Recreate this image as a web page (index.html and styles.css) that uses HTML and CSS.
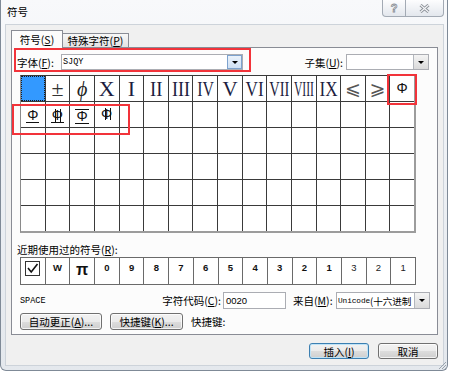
FILE: index.html
```html
<!DOCTYPE html>
<html lang="zh-CN">
<head>
<meta charset="utf-8">
<title>符号</title>
<link rel="stylesheet" href="styles.css">
</head>
<body>
<div class="window">
  <div class="titlebar">
    <span class="title">符号</span>
    <div class="caption">
      <span class="cap-btn help"><span class="help-glyph">?</span></span>
      <span class="cap-btn close">
        <svg width="11" height="9" viewBox="0 0 11 9"><path d="M1.5 1 L9.5 8 M9.5 1 L1.5 8" stroke="#8c9198" stroke-width="3"/><path d="M1.5 1 L9.5 8 M9.5 1 L1.5 8" stroke="#f5f6f8" stroke-width="1.1"/></svg>
      </span>
    </div>
  </div>
  <div class="client">
    <div class="tabs">
      <div class="tab active">符号(<u>S</u>)</div>
      <div class="tab">特殊字符(<u>P</u>)</div>
    </div>
    <div class="panel">
      <div class="font-row">
        <span class="lbl font-lbl">字体(<u>F</u>):</span>
        <div class="combo font-combo"><span class="combo-text mono">SJQY</span><span class="dd focus"></span></div>
        <span class="lbl subset-lbl">子集(<u>U</u>):</span>
        <div class="combo subset-combo"><span class="combo-text"></span><span class="dd"></span></div>
      </div>
      <div class="grid">
        <div class="cell sel"></div>
        <div class="cell"><span class="s-serif pm">±</span></div>
        <div class="cell"><span class="s-serif it">ϕ</span></div>
        <div class="cell"><span class="s-serif">X</span></div>
        <div class="cell"><span class="s-serif">I</span></div>
        <div class="cell"><span class="s-serif w85">II</span></div>
        <div class="cell"><span class="s-serif w82">III</span></div>
        <div class="cell"><span class="s-serif w72">IV</span></div>
        <div class="cell"><span class="s-serif w95">V</span></div>
        <div class="cell"><span class="s-serif w78">VI</span></div>
        <div class="cell"><span class="s-serif w66">VII</span></div>
        <div class="cell"><span class="s-serif w53">VIII</span></div>
        <div class="cell"><span class="s-serif w78">IX</span></div>
        <div class="cell"><span class="s-math">⩽</span></div>
        <div class="cell"><span class="s-math">⩾</span></div>
        <div class="cell"><span class="phi">Φ</span></div>

        <div class="cell"><span class="phi ul">Φ</span></div>
        <div class="cell"><span class="phi ul dv">Φ</span></div>
        <div class="cell"><span class="phi ul ol">Φ</span></div>
        <div class="cell"><span class="phi dv">Φ</span></div>
        <div class="cell"></div><div class="cell"></div><div class="cell"></div><div class="cell"></div>
        <div class="cell"></div><div class="cell"></div><div class="cell"></div><div class="cell"></div>
        <div class="cell"></div><div class="cell"></div><div class="cell"></div><div class="cell"></div>

        <div class="cell"></div><div class="cell"></div><div class="cell"></div><div class="cell"></div>
        <div class="cell"></div><div class="cell"></div><div class="cell"></div><div class="cell"></div>
        <div class="cell"></div><div class="cell"></div><div class="cell"></div><div class="cell"></div>
        <div class="cell"></div><div class="cell"></div><div class="cell"></div><div class="cell"></div>

        <div class="cell"></div><div class="cell"></div><div class="cell"></div><div class="cell"></div>
        <div class="cell"></div><div class="cell"></div><div class="cell"></div><div class="cell"></div>
        <div class="cell"></div><div class="cell"></div><div class="cell"></div><div class="cell"></div>
        <div class="cell"></div><div class="cell"></div><div class="cell"></div><div class="cell"></div>

        <div class="cell"></div><div class="cell"></div><div class="cell"></div><div class="cell"></div>
        <div class="cell"></div><div class="cell"></div><div class="cell"></div><div class="cell"></div>
        <div class="cell"></div><div class="cell"></div><div class="cell"></div><div class="cell"></div>
        <div class="cell"></div><div class="cell"></div><div class="cell"></div><div class="cell"></div>

        <div class="cell"></div><div class="cell"></div><div class="cell"></div><div class="cell"></div>
        <div class="cell"></div><div class="cell"></div><div class="cell"></div><div class="cell"></div>
        <div class="cell"></div><div class="cell"></div><div class="cell"></div><div class="cell"></div>
        <div class="cell"></div><div class="cell"></div><div class="cell"></div><div class="cell"></div>
      </div>
      <div class="recent-lbl">近期使用过的符号(<u>R</u>):</div>
      <div class="recent">
        <div class="rc chk"><svg width="15" height="15" viewBox="0 0 15 15"><rect x="0.5" y="0.5" width="14" height="14" fill="#fff" stroke="#333"/><path d="M3 7 L6.2 11 L12.5 3" fill="none" stroke="#111" stroke-width="1.6"/></svg></div>
        <div class="rc">W</div>
        <div class="rc pi">π</div>
        <div class="rc">0</div>
        <div class="rc">9</div>
        <div class="rc">8</div>
        <div class="rc">7</div>
        <div class="rc">6</div>
        <div class="rc">5</div>
        <div class="rc">4</div>
        <div class="rc">3</div>
        <div class="rc">2</div>
        <div class="rc">1</div>
        <div class="rc thin">3</div>
        <div class="rc thin">2</div>
        <div class="rc thin">1</div>
      </div>
      <div class="code-row">
        <span class="space-name">SPACE</span>
        <span class="lbl code-lbl">字符代码(<u>C</u>):</span>
        <div class="input">0020</div>
        <span class="lbl from-lbl">来自(<u>M</u>):</span>
        <div class="combo from-combo"><span class="combo-text from-text"><span class="mono-s">Unicode</span>(十六进制</span><span class="dd"></span></div>
      </div>
      <div class="btn-row">
        <button class="btn b-auto">自动更正(<u>A</u>)...</button>
        <button class="btn b-key">快捷键(<u>K</u>)...</button>
        <span class="lbl">快捷键:</span>
      </div>
    </div>
    <div class="footer">
      <button class="btn b-foot default">插入(<u>I</u>)</button>
      <button class="btn b-foot">取消</button>
    </div>
  </div>
</div>
<svg class="grip" width="10" height="10" viewBox="0 0 10 10"><path d="M9 2 L2 9 M9 5 L5 9 M9 8 L8 9" stroke="#9aa3ad" stroke-width="1"/></svg>
<div class="mark mark-font"></div>
<div class="mark mark-phi"></div>
<div class="mark mark-row"></div>
</body>
</html>
```
FILE: styles.css
```css
* { box-sizing: border-box; }
html, body { margin: 0; padding: 0; }
body {
  width: 450px;
  height: 372px;
  overflow: hidden;
  position: relative;
  background: #ffffff;
  font-family: "Noto Sans CJK SC", "Liberation Sans", sans-serif;
  font-size: 10.5px;
  color: #000;
}
u { text-decoration: underline; text-underline-offset: 1px; }
.mono { font-family: "Liberation Mono", monospace; font-size: 8.5px; }

.window {
  width: 448px;
  height: 371px;
  border: 1px solid #7f8a97;
  border-top: none;
  border-radius: 0 0 6px 6px;
  background: linear-gradient(180deg, #f8f9fb 0%, #eef1f5 40%, #e4e8ed 100%);
  padding: 0 3px 4px 4px;
  display: flex;
  flex-direction: column;
}

.titlebar { height: 24px; display: flex; align-items: flex-start; flex: none; }
.title { margin: 5px 0 0 2px; line-height: 13px; }
.caption { margin-left: auto; display: flex; }
.cap-btn {
  height: 17px;
  border: 1px solid #a3aab4;
  border-top: none;
  background: linear-gradient(#fdfdfe, #e3e7ed);
  display: flex;
  align-items: center;
  justify-content: center;
}
.help { width: 24px; border-radius: 0 0 0 4px; margin-right: -1px; }
.close { width: 39px; border-radius: 0 0 4px 0; }
.help-glyph {
  font: bold 11px "Liberation Sans", sans-serif;
  color: #fbfbfb;
  -webkit-text-stroke: 0.8px #8a8f96;
  line-height: 11px;
}

.client {
  flex: 1;
  border: 1px solid #cdd3da;
  background: #f0f0f0;
  padding: 5px 5px 0 5px;
  display: flex;
  flex-direction: column;
}

.tabs {
  display: flex;
  align-items: flex-end;
  height: 18px;
  margin-bottom: -1px;
  position: relative;
  z-index: 1;
  flex: none;
}
.tab {
  width: 67px;
  height: 14px;
  margin-left: -1px;
  margin-bottom: 1px;
  border: 1px solid #898c95;
  border-bottom: none;
  background: linear-gradient(#f7f7f7, #e3e3e3);
  display: flex;
  align-items: center;
  justify-content: center;
  line-height: 12px;
}
.tab.active {
  width: 52px;
  height: 18px;
  margin: 0;
  background: #fcfcfc;
}

.panel {
  height: 288px;
  flex: none;
  border: 1px solid #898c95;
  background: #fcfcfc;
  display: flex;
  flex-direction: column;
}

.lbl { white-space: nowrap; line-height: 13px; }

.font-row {
  display: flex;
  align-items: center;
  height: 16px;
  margin-top: 6px;
  padding: 0 8px 0 5px;
}
.font-lbl { width: 44px; }
.combo {
  height: 16px;
  border: 1px solid #abadb3;
  background: #fff;
  display: flex;
  overflow: hidden;
}
.font-combo { width: 182px; }
.subset-lbl { margin-left: auto; margin-right: 3px; }
.subset-combo { width: 83px; }
.combo-text {
  flex: 1;
  min-width: 0;
  padding-left: 1px;
  display: flex;
  align-items: center;
  overflow: hidden;
  white-space: nowrap;
}
.from-text { font-size: 9.6px; letter-spacing: -0.1px; }
.mono-s { font-family: "Liberation Mono", monospace; font-size: 7.8px; letter-spacing: -0.1px; }
.dd {
  width: 15px;
  flex: none;
  border-left: 1px solid #b3b7bd;
  background: linear-gradient(#f4f4f4, #dadada);
  display: flex;
  align-items: center;
  justify-content: center;
}
.dd::before {
  content: "";
  border-left: 3px solid transparent;
  border-right: 3px solid transparent;
  border-top: 3px solid #000;
}
.dd.focus {
  border: 1px solid #7da2ce;
  background: linear-gradient(#eaf2fb, #cfe0f4);
}

.grid {
  margin: 5px 0 0 8px;
  width: 396px;
  height: 158px;
  display: grid;
  grid-template-columns: repeat(16, 1fr);
  grid-template-rows: repeat(6, 1fr);
  gap: 1px;
  background: #3a3a3a;
  border-top: 1px solid #3a3a3a;
  border-left: 1px solid #8a8a8a;
  border-right: 2px solid #9c9c9c;
  border-bottom: 2px solid #9c9c9c;
  flex: none;
}
.cell {
  background: #fff;
  display: flex;
  align-items: center;
  justify-content: center;
  overflow: hidden;
  line-height: 1;
}
.cell.sel { background: #3399ff; border: 1px dotted #1a1a1a; }

.s-serif {
  display: inline-block;
  font-family: "Liberation Serif", "DejaVu Serif", serif;
  font-size: 22px;
  color: #1c1c40;
  white-space: nowrap;
}
.s-serif.pm { color: #333; }
.s-serif.it { font-style: italic; font-size: 20px; color: #222; }
.w95 { transform: scaleX(0.95); }
.w85 { transform: scaleX(0.85); }
.w82 { transform: scaleX(0.82); }
.w78 { transform: scaleX(0.78); }
.w72 { transform: scaleX(0.72); }
.w66 { transform: scaleX(0.66); }
.w53 { transform: scaleX(0.53); }
.s-math {
  font-family: "DejaVu Sans", sans-serif;
  font-size: 19px;
  color: #555;
}
.phi {
  position: relative;
  display: inline-block;
  font: 14px/11px "Liberation Sans", sans-serif;
  color: #111;
  padding: 0 1px;
}
.phi.ul { border-bottom: 1px solid #111; padding-bottom: 1px; margin-top: 3px; }
.phi.ol { border-top: 1px solid #111; padding-top: 1px; }
.phi.dv::after {
  content: "";
  position: absolute;
  left: 50%;
  top: -1px;
  bottom: 0;
  width: 4px;
  margin-left: -2px;
  border-left: 1px solid #111;
  border-right: 1px solid #111;
}

.recent-lbl { margin: 10px 0 0 5px; height: 13px; line-height: 13px; }
.recent {
  margin: 1px 0 0 8px;
  width: 396px;
  height: 28px;
  display: grid;
  grid-template-columns: repeat(16, 1fr);
  gap: 1px;
  background: #6a6a6a;
  border: 1px solid #6a6a6a;
  flex: none;
}
.rc {
  background: #fff;
  display: flex;
  justify-content: center;
  align-items: flex-start;
  padding-top: 5px;
  font: bold 9.5px/1 "Liberation Sans", sans-serif;
  color: #111;
}
.rc.chk { padding-top: 3px; }
.rc.pi { font: bold 16px/1 "Liberation Sans", sans-serif; padding-top: 4px; }
.rc.thin { font-weight: normal; color: #222; }

.code-row {
  display: flex;
  align-items: center;
  height: 17px;
  margin-top: 7px;
  padding: 0 7px 0 8px;
}
.space-name { flex: 1; font: 8.5px "Liberation Mono", monospace; }
.code-lbl { margin-right: 2px; }
.input {
  width: 63px;
  height: 17px;
  border: 1px solid #abadb3;
  background: #fff;
  font: 9.5px "Liberation Sans", sans-serif;
  padding-left: 2px;
  display: flex;
  align-items: center;
}
.from-lbl { width: 43px; margin-left: 7px; }
.from-combo { width: 94px; height: 17px; }

.btn-row {
  display: flex;
  align-items: center;
  height: 17px;
  margin-top: 4px;
  padding-left: 8px;
  gap: 8px;
}
.btn {
  height: 17px;
  padding: 0;
  border: 1px solid #707070;
  border-radius: 3px;
  background: linear-gradient(#f2f2f2 0%, #ebebeb 50%, #dddddd 51%, #cfcfcf 100%);
  box-shadow: inset 0 0 0 1px rgba(255, 255, 255, 0.75);
  font: inherit;
  color: #000;
  display: flex;
  align-items: center;
  justify-content: center;
  line-height: 13px;
}
.b-auto { width: 82px; }
.b-key { width: 73px; }

.footer {
  display: flex;
  justify-content: flex-end;
  gap: 9px;
  margin-top: 8px;
}
.b-foot { width: 60px; height: 16px; }
.btn.default { border-color: #3c7fb1; box-shadow: inset 0 0 0 1px #bfe3f7; }

.grip { position: absolute; left: 437px; top: 360px; }

.mark {
  position: absolute;
  border: 2px solid #f2333a;
  pointer-events: none;
}
.mark-font { left: 14px; top: 48px; width: 237px; height: 24px; }
.mark-phi { left: 387px; top: 74px; width: 30px; height: 31px; }
.mark-row { left: 12px; top: 104px; width: 118px; height: 31px; }
```
